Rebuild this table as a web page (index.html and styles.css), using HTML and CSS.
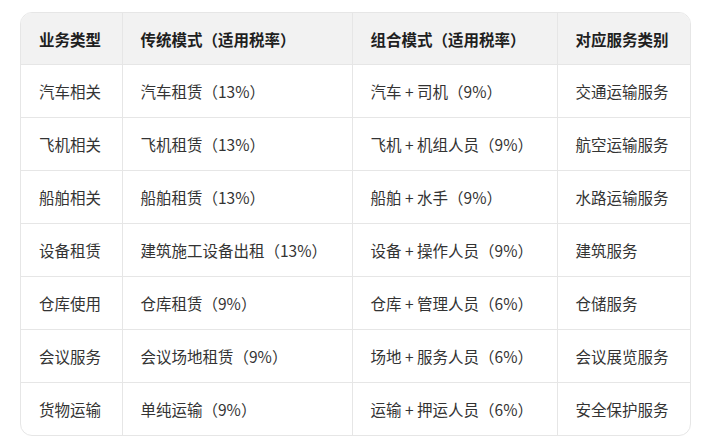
FILE: index.html
```html
<!DOCTYPE html>
<html lang="zh-CN">
<head>
<meta charset="utf-8">
<link rel="stylesheet" href="styles.css">
</head>
<body>
<div class="wrap">
  <table class="tax">
    <colgroup>
      <col class="c1"><col class="c2"><col class="c3"><col class="c4">
    </colgroup>
    <thead>
      <tr><th>业务类型</th><th>传统模式（适用税率）</th><th>组合模式（适用税率）</th><th>对应服务类别</th></tr>
    </thead>
    <tbody>
      <tr><td>汽车相关</td><td>汽车租赁（13%）</td><td>汽车 + 司机（9%）</td><td>交通运输服务</td></tr>
      <tr><td>飞机相关</td><td>飞机租赁（13%）</td><td>飞机 + 机组人员（9%）</td><td>航空运输服务</td></tr>
      <tr><td>船舶相关</td><td>船舶租赁（13%）</td><td>船舶 + 水手（9%）</td><td>水路运输服务</td></tr>
      <tr><td>设备租赁</td><td>建筑施工设备出租（13%）</td><td>设备 + 操作人员（9%）</td><td>建筑服务</td></tr>
      <tr><td>仓库使用</td><td>仓库租赁（9%）</td><td>仓库 + 管理人员（6%）</td><td>仓储服务</td></tr>
      <tr><td>会议服务</td><td>会议场地租赁（9%）</td><td>场地 + 服务人员（6%）</td><td>会议展览服务</td></tr>
      <tr><td>货物运输</td><td>单纯运输（9%）</td><td>运输 + 押运人员（6%）</td><td>安全保护服务</td></tr>
    </tbody>
  </table>
</div>
</body>
</html>
```
FILE: styles.css
```css
html, body {
  margin: 0;
  padding: 0;
  background: #ffffff;
}
body {
  font-family: "Noto Sans CJK SC", "Noto Sans", sans-serif;
  font-size: 15.5px;
  color: #333333;
}
.wrap {
  margin: 12px 0 0 20px;
  width: 669px;
  border: 1px solid #e6e6e6;
  border-radius: 12px;
  overflow: hidden;
}
.tax {
  width: 100%;
  border-collapse: collapse;
  table-layout: fixed;
}
.c1 { width: 101px; }
.c2 { width: 230px; }
.c3 { width: 205px; }
.c4 { width: 133px; }
.tax th, .tax td {
  padding: 0 0 0 18px;
  text-align: left;
  white-space: nowrap;
  border-left: 1px solid #e6e6e6;
  border-top: 1px solid #e6e6e6;
  line-height: 20px;
}
.tax th:first-child, .tax td:first-child { border-left: none; }
.tax thead th {
  border-top: none;
  background: #f2f2f2;
  color: #1f1f1f;
  font-weight: 700;
  height: 51px;
}
.tax tbody td {
  height: 52px;
}
```
